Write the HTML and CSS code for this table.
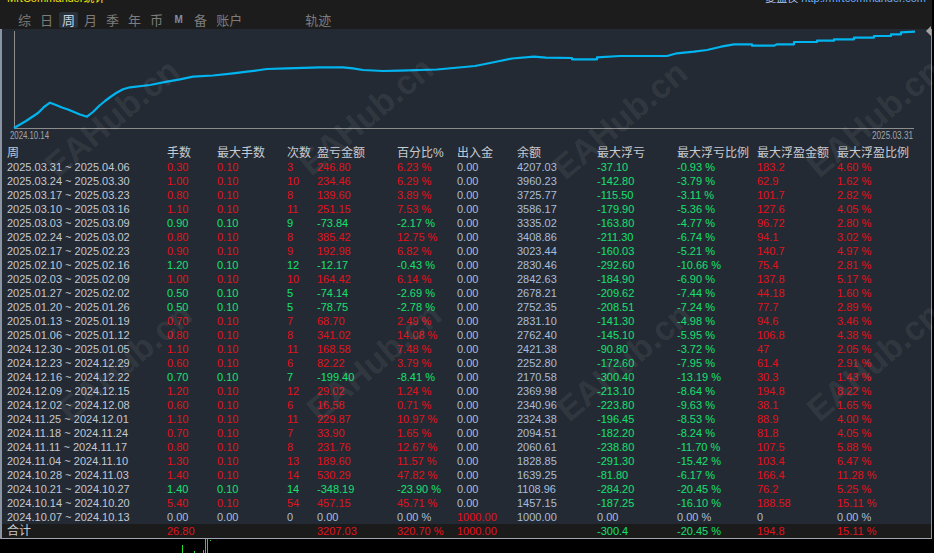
FILE: index.html
```html
<!DOCTYPE html>
<html lang="zh-CN">
<head>
<meta charset="utf-8">
<title>MrtCommander统计</title>
<link rel="stylesheet" href="styles.css">
</head>
<body>
<div class="app">
  <header class="topbar">
    <div class="titlerow">
      <span class="title">MrtCommander统计</span>
      <span class="site"><span class="site-label">复盘仪</span> <span class="site-link">http://mrtcommander.com</span></span>
    </div>
    <nav class="tabs">
      <span class="tab">综</span>
      <span class="tab">日</span>
      <span class="tab active">周</span>
      <span class="tab">月</span>
      <span class="tab">季</span>
      <span class="tab">年</span>
      <span class="tab">币</span>
      <span class="tab icon">M</span>
      <span class="tab">备</span>
      <span class="tab">账户</span>
      <span class="tab far">轨迹</span>
    </nav>
  </header>

  <main class="panel">
    <svg class="chart" viewBox="2 29 929 114" width="929" height="114" xmlns="http://www.w3.org/2000/svg">
      <line x1="14.5" y1="31" x2="14.5" y2="128.5" stroke="#8c8c8c" stroke-width="1"/>
      <line x1="14" y1="128.5" x2="914" y2="128.5" stroke="#8c8c8c" stroke-width="1"/>
      <polyline fill="none" stroke="#00b4f0" stroke-width="2.2" stroke-linejoin="round"
        points="14,128 20,124.5 26,121 32,117 38,113 44,107 50,102.7 56,105 62,107.5 68,109.5 74,112 80,114.5 87,116.7 93,112 99,106 105,101 111,96.5 117,92.5 123,89.3 130,87.3 150,85 167,81.7 180,79.3 193,76.7 213,75.5 233,73.3 247,71.7 260,70 267,69 287,68.3 320,67.3 343,67.3 353,68.3 363,70 383,71 400,70.7 437,69.5 475,66 495,62 512,58.5 534,56.7 546,57.7 572,58 572,59.3 597,59.3 597,57.3 620,56 667,56 677,53.3 694,51.7 707,50 721,46.7 734,44.3 752,44.3 752,45.7 774,45.7 777,44.3 794,44.3 794,42 817,42 817,40.7 834,40.7 834,39.3 854,39.3 854,37.7 874,37.7 874,36 891,36 891,34.3 901,34.3 901,32.3 915,31.7"/>
      <text x="10" y="139" font-size="10" fill="#a2a6ac" font-family="Liberation Sans, sans-serif" textLength="39" lengthAdjust="spacingAndGlyphs">2024.10.14</text>
      <text x="872" y="139" font-size="10" fill="#a2a6ac" font-family="Liberation Sans, sans-serif" textLength="41" lengthAdjust="spacingAndGlyphs">2025.03.31</text>
    </svg>

    <div class="table">
      <div class="row head"><span>周</span><span>手数</span><span>最大手数</span><span>次数</span><span>盈亏金额</span><span>百分比%</span><span>出入金</span><span>余额</span><span>最大浮亏</span><span>最大浮亏比例</span><span>最大浮盈金额</span><span>最大浮盈比例</span></div>

      <div class="row"><span class="d">2025.03.31 ~ 2025.04.06</span><span class="r">0.30</span><span class="r">0.10</span><span class="r">3</span><span class="r">246.80</span><span class="r">6.23 %</span><span class="b">0.00</span><span class="b">4207.03</span><span class="g">-37.10</span><span class="g">-0.93 %</span><span class="r">183.2</span><span class="r">4.60 %</span></div>
      <div class="row"><span class="d">2025.03.24 ~ 2025.03.30</span><span class="r">1.00</span><span class="r">0.10</span><span class="r">10</span><span class="r">234.46</span><span class="r">6.29 %</span><span class="b">0.00</span><span class="b">3960.23</span><span class="g">-142.80</span><span class="g">-3.79 %</span><span class="r">62.9</span><span class="r">1.62 %</span></div>
      <div class="row"><span class="d">2025.03.17 ~ 2025.03.23</span><span class="r">0.80</span><span class="r">0.10</span><span class="r">8</span><span class="r">139.60</span><span class="r">3.89 %</span><span class="b">0.00</span><span class="b">3725.77</span><span class="g">-115.50</span><span class="g">-3.11 %</span><span class="r">101.7</span><span class="r">2.82 %</span></div>
      <div class="row"><span class="d">2025.03.10 ~ 2025.03.16</span><span class="r">1.10</span><span class="r">0.10</span><span class="r">11</span><span class="r">251.15</span><span class="r">7.53 %</span><span class="b">0.00</span><span class="b">3586.17</span><span class="g">-179.90</span><span class="g">-5.36 %</span><span class="r">127.6</span><span class="r">4.05 %</span></div>
      <div class="row"><span class="d">2025.03.03 ~ 2025.03.09</span><span class="g">0.90</span><span class="g">0.10</span><span class="g">9</span><span class="g">-73.84</span><span class="g">-2.17 %</span><span class="b">0.00</span><span class="b">3335.02</span><span class="g">-163.80</span><span class="g">-4.77 %</span><span class="r">96.72</span><span class="r">2.80 %</span></div>
      <div class="row"><span class="d">2025.02.24 ~ 2025.03.02</span><span class="r">0.80</span><span class="r">0.10</span><span class="r">8</span><span class="r">385.42</span><span class="r">12.75 %</span><span class="b">0.00</span><span class="b">3408.86</span><span class="g">-211.30</span><span class="g">-6.74 %</span><span class="r">94.1</span><span class="r">3.02 %</span></div>
      <div class="row"><span class="d">2025.02.17 ~ 2025.02.23</span><span class="r">0.90</span><span class="r">0.10</span><span class="r">9</span><span class="r">192.98</span><span class="r">6.82 %</span><span class="b">0.00</span><span class="b">3023.44</span><span class="g">-160.03</span><span class="g">-5.21 %</span><span class="r">140.7</span><span class="r">4.97 %</span></div>
      <div class="row"><span class="d">2025.02.10 ~ 2025.02.16</span><span class="g">1.20</span><span class="g">0.10</span><span class="g">12</span><span class="g">-12.17</span><span class="g">-0.43 %</span><span class="b">0.00</span><span class="b">2830.46</span><span class="g">-292.60</span><span class="g">-10.66 %</span><span class="r">75.4</span><span class="r">2.81 %</span></div>
      <div class="row"><span class="d">2025.02.03 ~ 2025.02.09</span><span class="r">1.00</span><span class="r">0.10</span><span class="r">10</span><span class="r">164.42</span><span class="r">6.14 %</span><span class="b">0.00</span><span class="b">2842.63</span><span class="g">-184.90</span><span class="g">-6.90 %</span><span class="r">137.8</span><span class="r">5.17 %</span></div>
      <div class="row"><span class="d">2025.01.27 ~ 2025.02.02</span><span class="g">0.50</span><span class="g">0.10</span><span class="g">5</span><span class="g">-74.14</span><span class="g">-2.69 %</span><span class="b">0.00</span><span class="b">2678.21</span><span class="g">-209.62</span><span class="g">-7.44 %</span><span class="r">44.18</span><span class="r">1.60 %</span></div>
      <div class="row"><span class="d">2025.01.20 ~ 2025.01.26</span><span class="g">0.50</span><span class="g">0.10</span><span class="g">5</span><span class="g">-78.75</span><span class="g">-2.78 %</span><span class="b">0.00</span><span class="b">2752.35</span><span class="g">-208.51</span><span class="g">-7.24 %</span><span class="r">77.7</span><span class="r">2.89 %</span></div>
      <div class="row"><span class="d">2025.01.13 ~ 2025.01.19</span><span class="r">0.70</span><span class="r">0.10</span><span class="r">7</span><span class="r">68.70</span><span class="r">2.49 %</span><span class="b">0.00</span><span class="b">2831.10</span><span class="g">-141.30</span><span class="g">-4.98 %</span><span class="r">94.6</span><span class="r">3.46 %</span></div>
      <div class="row"><span class="d">2025.01.06 ~ 2025.01.12</span><span class="r">0.80</span><span class="r">0.10</span><span class="r">8</span><span class="r">341.02</span><span class="r">14.08 %</span><span class="b">0.00</span><span class="b">2762.40</span><span class="g">-145.10</span><span class="g">-5.95 %</span><span class="r">106.8</span><span class="r">4.38 %</span></div>
      <div class="row"><span class="d">2024.12.30 ~ 2025.01.05</span><span class="r">1.10</span><span class="r">0.10</span><span class="r">11</span><span class="r">168.58</span><span class="r">7.48 %</span><span class="b">0.00</span><span class="b">2421.38</span><span class="g">-90.80</span><span class="g">-3.72 %</span><span class="r">47</span><span class="r">2.05 %</span></div>
      <div class="row"><span class="d">2024.12.23 ~ 2024.12.29</span><span class="r">0.60</span><span class="r">0.10</span><span class="r">6</span><span class="r">82.22</span><span class="r">3.79 %</span><span class="b">0.00</span><span class="b">2252.80</span><span class="g">-172.60</span><span class="g">-7.95 %</span><span class="r">61.4</span><span class="r">2.91 %</span></div>
      <div class="row"><span class="d">2024.12.16 ~ 2024.12.22</span><span class="g">0.70</span><span class="g">0.10</span><span class="g">7</span><span class="g">-199.40</span><span class="g">-8.41 %</span><span class="b">0.00</span><span class="b">2170.58</span><span class="g">-300.40</span><span class="g">-13.19 %</span><span class="r">30.3</span><span class="r">1.43 %</span></div>
      <div class="row"><span class="d">2024.12.09 ~ 2024.12.15</span><span class="r">1.20</span><span class="r">0.10</span><span class="r">12</span><span class="r">29.02</span><span class="r">1.24 %</span><span class="b">0.00</span><span class="b">2369.98</span><span class="g">-213.10</span><span class="g">-8.64 %</span><span class="r">194.8</span><span class="r">8.22 %</span></div>
      <div class="row"><span class="d">2024.12.02 ~ 2024.12.08</span><span class="r">0.60</span><span class="r">0.10</span><span class="r">6</span><span class="r">16.58</span><span class="r">0.71 %</span><span class="b">0.00</span><span class="b">2340.96</span><span class="g">-223.80</span><span class="g">-9.63 %</span><span class="r">38.1</span><span class="r">1.65 %</span></div>
      <div class="row"><span class="d">2024.11.25 ~ 2024.12.01</span><span class="r">1.10</span><span class="r">0.10</span><span class="r">11</span><span class="r">229.87</span><span class="r">10.97 %</span><span class="b">0.00</span><span class="b">2324.38</span><span class="g">-196.45</span><span class="g">-8.53 %</span><span class="r">88.9</span><span class="r">4.00 %</span></div>
      <div class="row"><span class="d">2024.11.18 ~ 2024.11.24</span><span class="r">0.70</span><span class="r">0.10</span><span class="r">7</span><span class="r">33.90</span><span class="r">1.65 %</span><span class="b">0.00</span><span class="b">2094.51</span><span class="g">-182.20</span><span class="g">-8.24 %</span><span class="r">81.8</span><span class="r">4.05 %</span></div>
      <div class="row"><span class="d">2024.11.11 ~ 2024.11.17</span><span class="r">0.80</span><span class="r">0.10</span><span class="r">8</span><span class="r">231.76</span><span class="r">12.67 %</span><span class="b">0.00</span><span class="b">2060.61</span><span class="g">-238.80</span><span class="g">-11.70 %</span><span class="r">107.5</span><span class="r">5.88 %</span></div>
      <div class="row"><span class="d">2024.11.04 ~ 2024.11.10</span><span class="r">1.30</span><span class="r">0.10</span><span class="r">13</span><span class="r">189.60</span><span class="r">11.57 %</span><span class="b">0.00</span><span class="b">1828.85</span><span class="g">-291.30</span><span class="g">-15.42 %</span><span class="r">103.4</span><span class="r">6.47 %</span></div>
      <div class="row"><span class="d">2024.10.28 ~ 2024.11.03</span><span class="r">1.40</span><span class="r">0.10</span><span class="r">14</span><span class="r">530.29</span><span class="r">47.82 %</span><span class="b">0.00</span><span class="b">1639.25</span><span class="g">-81.80</span><span class="g">-6.17 %</span><span class="r">166.4</span><span class="r">11.28 %</span></div>
      <div class="row"><span class="d">2024.10.21 ~ 2024.10.27</span><span class="g">1.40</span><span class="g">0.10</span><span class="g">14</span><span class="g">-348.19</span><span class="g">-23.90 %</span><span class="b">0.00</span><span class="b">1108.96</span><span class="g">-284.20</span><span class="g">-20.45 %</span><span class="r">76.2</span><span class="r">5.25 %</span></div>
      <div class="row"><span class="d">2024.10.14 ~ 2024.10.20</span><span class="r">5.40</span><span class="r">0.10</span><span class="r">54</span><span class="r">457.15</span><span class="r">45.71 %</span><span class="b">0.00</span><span class="b">1457.15</span><span class="g">-187.25</span><span class="g">-16.10 %</span><span class="r">188.58</span><span class="r">15.11 %</span></div>
      <div class="row"><span class="d">2024.10.07 ~ 2024.10.13</span><span class="b">0.00</span><span class="b">0.00</span><span class="b">0</span><span class="b">0.00</span><span class="b">0.00 %</span><span class="r">1000.00</span><span class="b">1000.00</span><span class="b">0.00</span><span class="b">0.00 %</span><span class="b">0</span><span class="b">0.00 %</span></div>

      <div class="row total"><span class="sum">合计</span><span class="r">26.80</span><span></span><span></span><span class="r">3207.03</span><span class="r">320.70 %</span><span class="r">1000.00</span><span></span><span class="g">-300.4</span><span class="g">-20.45 %</span><span class="r">194.8</span><span class="r">15.11 %</span></div>
    </div>
  </main>

  <div class="bottom">
    <svg class="marks" width="934" height="14" viewBox="0 0 934 14" xmlns="http://www.w3.org/2000/svg">
      <g stroke="#1fe01f" stroke-width="1">
        <line x1="182.5" y1="6" x2="182.5" y2="14"/>
        <line x1="194.5" y1="12" x2="194.5" y2="14"/>
        <line x1="203.5" y1="11" x2="203.5" y2="14"/>
        <line x1="205.5" y1="0" x2="205.5" y2="14"/>
        <line x1="207.5" y1="0" x2="207.5" y2="14"/>
        <line x1="210.5" y1="1" x2="210.5" y2="2"/>
      </g>
    </svg>
  </div>

  <svg class="handle" width="6" height="10" viewBox="0 0 6 10" xmlns="http://www.w3.org/2000/svg"><polygon points="5,0 0,5 5,10" fill="#a4a4a4"/></svg>

  <div class="watermarks" aria-hidden="true">
    <span class="wm wm1">EAHub.cn</span>
    <span class="wm wm2">EAHub.cn</span>
    <span class="wm wm3">EAHub.cn</span>
    <span class="wm wm4">EAHub.cn</span>
    <span class="wm wm5">EAHub.cn</span>
    <span class="wm wm6">EAHub.cn</span>
    <span class="wm wm7">EAHub.cn</span>
    <span class="wm wm8">EAHub.cn</span>
  </div>
</div>
</body>
</html>
```

FILE: styles.css
```css
* {
  box-sizing: border-box;
}

html,
body {
  margin: 0;
  padding: 0;
  background: #000;
}

body {
  width: 934px;
  height: 553px;
  overflow: hidden;
  font-family: "Liberation Sans", "Noto Sans CJK SC", sans-serif;
}

.app {
  position: relative;
  width: 932px;
}

/* ---------- top bar ---------- */
.topbar {
  height: 29px;
  background: #1c1c1c;
}

.titlerow {
  height: 4px;
  display: flex;
  justify-content: space-between;
  align-items: flex-end;
  padding: 0 6px 0 7px;
  font-size: 11px;
  line-height: 12px;
  white-space: nowrap;
}

.title {
  color: #f2e600;
}

.site-label {
  color: #b4c8ee;
}

.site-link {
  color: #6aaeff;
}

.tabs {
  display: flex;
  gap: 3px;
  height: 25px;
  padding: 8px 0 0 15px;
}

.tab {
  height: 16px;
  line-height: 16px;
  padding: 0 3px;
  border-radius: 2px;
  font-family: "Noto Sans CJK SC", sans-serif;
  font-size: 13px;
  color: #7c7c7c;
}

.tab.active {
  background: #29313b;
  color: #c4d2e6;
}

.tab.icon {
  width: 19px;
  text-align: center;
  font-family: "Liberation Sans", sans-serif;
  font-size: 10px;
  font-weight: bold;
  color: #7a8cab;
}

.tab.far {
  margin-left: 54px;
}

/* ---------- panel ---------- */
.panel {
  background: #242a33;
  border-left: 2px solid #8a94a2;
  border-right: 1px solid #8a94a2;
  border-bottom: 1px solid #a0a8b4;
}

.chart {
  display: block;
}

.table {
  padding-top: 3px;
}

.row {
  display: grid;
  grid-template-columns: 160px 50px 70px 30px 80px 60px 60px 80px 80px 80px 80px 1fr;
  height: 14px;
  padding-left: 5px;
  font-size: 11px;
  line-height: 14px;
  white-space: nowrap;
}

.row.head {
  font-size: 12px;
  color: #c6cad2;
}

.row.total {
  background: #1b1b1b;
}

.sum {
  font-size: 12px;
  color: #c6cad2;
}

.d {
  color: #c3c8d1;
}

.r {
  color: #e0121c;
}

.g {
  color: #14e070;
}

.b {
  color: #a8bedc;
}

/* ---------- bottom strip ---------- */
.bottom {
  height: 14px;
  background: #000;
}

.marks {
  display: block;
}

/* ---------- overlays ---------- */
.handle {
  position: absolute;
  left: 926px;
  top: 26px;
}

.watermarks {
  position: absolute;
  left: 0;
  top: 0;
  width: 934px;
  height: 553px;
  overflow: hidden;
  pointer-events: none;
}

.wm {
  position: absolute;
  transform: translate(-50%, -50%) rotate(-40deg);
  font-family: "Liberation Sans", sans-serif;
  font-size: 34px;
  font-weight: bold;
  color: rgba(255, 255, 255, 0.08);
  white-space: nowrap;
}

.wm1 { left: 112px; top: 118px; }
.wm2 { left: 366px; top: 116px; }
.wm3 { left: 620px; top: 120px; }
.wm4 { left: 874px; top: 118px; }
.wm5 { left: 125px; top: 362px; }
.wm6 { left: 374px; top: 362px; }
.wm7 { left: 624px; top: 362px; }
.wm8 { left: 874px; top: 362px; }
```
